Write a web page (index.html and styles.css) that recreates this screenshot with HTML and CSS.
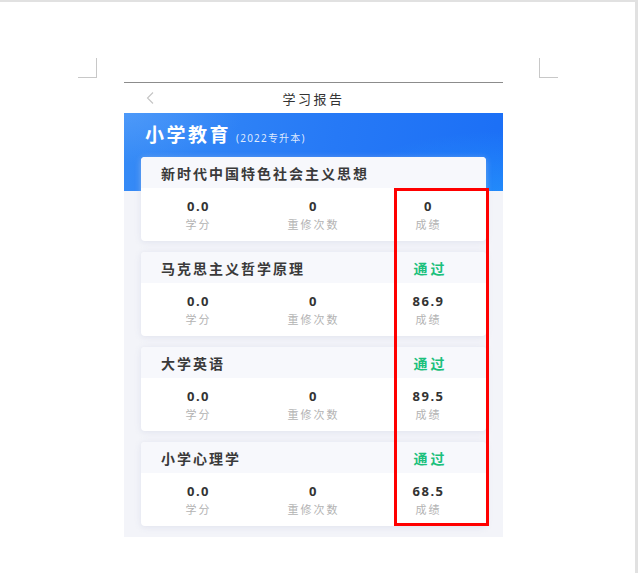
FILE: index.html
```html
<!DOCTYPE html>
<html lang="zh-CN">

<head>
    <meta charset="UTF-8">
    <meta name="viewport" content="width=device-width, initial-scale=1.0">
    <title>学习报告</title>
    <link rel="stylesheet" href="styles.css">
</head>

<body>
    <div class="sheet">
        <div class="marks">
            <div class="mark mark-left"></div>
            <div class="mark mark-right"></div>
        </div>
        <div class="phone">
            <div class="nav">
                <svg class="back" width="8" height="12" viewBox="0 0 8 12">
                    <polyline points="7,0.5 1.5,6 7,11.5" fill="none" stroke="#c4c4c4" stroke-width="1.1" />
                </svg>
                <div class="nav-title">学习报告</div>
            </div>
            <div class="content">
                <div class="hero">
                    <span class="major">小学教育</span>
                    <span class="grade">(2022专升本)</span>
                </div>
                <div class="cards">
                    <div class="card">
                        <div class="card-head">
                            <div class="course">新时代中国特色社会主义思想</div>
                            <div class="status"></div>
                        </div>
                        <div class="card-body">
                            <div class="stat"><div class="value">0.0</div><div class="label">学分</div></div>
                            <div class="stat"><div class="value">0</div><div class="label">重修次数</div></div>
                            <div class="stat"><div class="value">0</div><div class="label">成绩</div></div>
                        </div>
                    </div>
                    <div class="card">
                        <div class="card-head">
                            <div class="course">马克思主义哲学原理</div>
                            <div class="status">通过</div>
                        </div>
                        <div class="card-body">
                            <div class="stat"><div class="value">0.0</div><div class="label">学分</div></div>
                            <div class="stat"><div class="value">0</div><div class="label">重修次数</div></div>
                            <div class="stat"><div class="value">86.9</div><div class="label">成绩</div></div>
                        </div>
                    </div>
                    <div class="card">
                        <div class="card-head">
                            <div class="course">大学英语</div>
                            <div class="status">通过</div>
                        </div>
                        <div class="card-body">
                            <div class="stat"><div class="value">0.0</div><div class="label">学分</div></div>
                            <div class="stat"><div class="value">0</div><div class="label">重修次数</div></div>
                            <div class="stat"><div class="value">89.5</div><div class="label">成绩</div></div>
                        </div>
                    </div>
                    <div class="card">
                        <div class="card-head">
                            <div class="course">小学心理学</div>
                            <div class="status">通过</div>
                        </div>
                        <div class="card-body">
                            <div class="stat"><div class="value">0.0</div><div class="label">学分</div></div>
                            <div class="stat"><div class="value">0</div><div class="label">重修次数</div></div>
                            <div class="stat"><div class="value">68.5</div><div class="label">成绩</div></div>
                        </div>
                    </div>
                </div>
            </div>
            <div class="highlight"></div>
        </div>
    </div>
</body>

</html>
```

FILE: styles.css
```css
* {
    box-sizing: border-box;
    margin: 0;
    padding: 0;
    font-family: "Noto Sans", "Noto Sans CJK SC", sans-serif;
    color: #333;
}

body {
    background: #fff;
}

.sheet {
    width: 638px;
    height: 573px;
    border-top: 2px solid #e1e1e1;
    border-right: 3px solid #e1e1e1;
    background: #fff;
}

.marks {
    display: flex;
    justify-content: space-between;
    width: 480px;
    height: 20px;
    margin: 56px 0 0 78px;
}

.mark {
    width: 19px;
    height: 20px;
    border-bottom: 1px solid #c8c8c8;
}

.mark-left {
    border-right: 1px solid #c8c8c8;
}

.mark-right {
    border-left: 1px solid #c8c8c8;
}

.phone {
    position: relative;
    width: 379px;
    margin: 4px 0 0 124px;
    border-top: 1px solid #8c8c8c;
}

.nav {
    position: relative;
    display: flex;
    align-items: center;
    justify-content: center;
    height: 30px;
    background: #fff;
}

.back {
    position: absolute;
    left: 22px;
    top: 9px;
}

.nav-title {
    font-size: 13px;
    letter-spacing: 2.5px;
    color: #333;
}

.content {
    background: #f3f4f9;
    padding-bottom: 11px;
}

.hero {
    display: flex;
    align-items: baseline;
    height: 78px;
    padding: 7px 0 0 21px;
    background:
        radial-gradient(ellipse 160px 60px at 100% 100%, rgba(40, 160, 255, 0.55), rgba(40, 160, 255, 0)),
        radial-gradient(ellipse 120px 50px at 0% 0%, rgba(120, 180, 255, 0.35), rgba(120, 180, 255, 0)),
        linear-gradient(100deg, #368bf6 0%, #2679f6 55%, #1b6ff6 100%);
}

.major {
    font-size: 19px;
    font-weight: 700;
    letter-spacing: 2.5px;
    color: #fff;
}

.grade {
    margin-left: 5px;
    font-size: 10px;
    letter-spacing: 1.2px;
    color: rgba(255, 255, 255, 0.85);
}

.cards {
    display: flex;
    flex-direction: column;
    gap: 11px;
    margin-top: -34px;
    padding: 0 17px;
}

.card {
    height: 84px;
    border-radius: 4px;
    background: #fff;
    overflow: hidden;
    box-shadow: 0 1px 6px rgba(200, 205, 225, 0.45);
}

.card-head {
    display: flex;
    align-items: center;
    height: 31px;
    background: #f7f8fc;
}

.course {
    flex: 1;
    padding-left: 20px;
    font-size: 14px;
    font-weight: 700;
    letter-spacing: 2px;
    color: #3a3a3a;
}

.status {
    width: 115px;
    padding-left: 4px;
    text-align: center;
    font-size: 14px;
    font-weight: 700;
    letter-spacing: 3px;
    color: #1cc07c;
}

.card-body {
    display: flex;
    height: 53px;
    padding-top: 9px;
}

.stat {
    flex: 1;
    text-align: center;
}

.value {
    height: 18px;
    line-height: 18px;
    font-size: 13px;
    font-weight: 700;
    letter-spacing: 1.5px;
    color: #333;
}

.label {
    height: 18px;
    margin-top: 1px;
    line-height: 18px;
    font-size: 11px;
    letter-spacing: 2px;
    color: #b3b3b3;
}

.highlight {
    position: absolute;
    left: 270px;
    top: 105px;
    width: 95px;
    height: 338px;
    border: 3px solid #ff0000;
}
```
